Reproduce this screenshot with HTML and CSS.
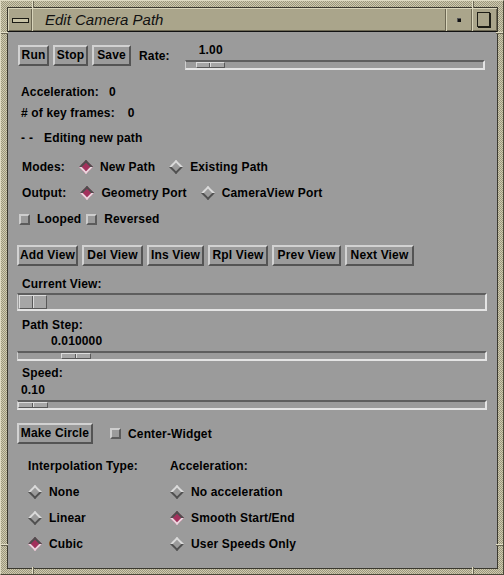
FILE: index.html
```html
<!DOCTYPE html>
<html>
<head>
<meta charset="utf-8">
<title>Edit Camera Path</title>
<link rel="stylesheet" href="styles.css">
</head>
<body>
<div class="window">
  <span class="notch nv nt" style="left:31px"></span>
  <span class="notch nv nt" style="left:471px"></span>
  <span class="notch nv nb" style="left:31px"></span>
  <span class="notch nv nb" style="left:471px"></span>
  <span class="notch nh nl" style="top:31px"></span>
  <span class="notch nh nr" style="top:31px"></span>
  <span class="notch nh nl" style="top:543px"></span>
  <span class="notch nh nr" style="top:543px"></span>
  <div class="inner">
    <div class="titlebar">
      <div class="seg seg-menu"><span class="menu-bar"></span></div>
      <div class="seg seg-title">Edit Camera Path</div>
      <div class="seg seg-min"><span class="min-dot"></span></div>
      <div class="seg seg-max"><span class="max-box"></span></div>
    </div>
    <div class="body">
      <div class="row1">
        <div class="grid3">
          <div class="btn">Run</div>
          <div class="btn">Stop</div>
          <div class="btn">Save</div>
        </div>
        <div class="rate-label">Rate:</div>
        <div class="scale">
          <div class="scale-val">1.00</div>
          <div class="trough thin"><span class="thumb" style="margin-left:10px;width:29px"></span></div>
        </div>
      </div>

      <div class="line l1">Acceleration:<span class="v">0</span></div>
      <div class="line l2"># of key frames:<span class="v">0</span></div>
      <div class="line l3"><span class="dash">--</span><span class="v">Editing new path</span></div>

      <div class="opts o1">
        <span class="opt-label">Modes:</span>
        <span class="radio first on"><i class="dia"></i>New Path</span>
        <span class="radio"><i class="dia"></i>Existing Path</span>
      </div>
      <div class="opts o2">
        <span class="opt-label">Output:</span>
        <span class="radio first on"><i class="dia"></i>Geometry Port</span>
        <span class="radio"><i class="dia"></i>CameraView Port</span>
      </div>
      <div class="opts o3">
        <span class="check"><i class="box"></i>Looped</span>
        <span class="check second"><i class="box"></i>Reversed</span>
      </div>

      <div class="grid6">
        <div class="btn">Add View</div>
        <div class="btn">Del View</div>
        <div class="btn">Ins View</div>
        <div class="btn">Rpl View</div>
        <div class="btn">Prev View</div>
        <div class="btn">Next View</div>
      </div>

      <div class="line s-label1">Current View:</div>
      <div class="trough wide tall"><span class="thumb" style="margin-left:1px;width:28px"></span></div>

      <div class="line s-label2">Path Step:</div>
      <div class="line s-val2">0.010000</div>
      <div class="trough wide thin t2"><span class="thumb" style="margin-left:43px;width:30px"></span></div>

      <div class="line s-label3">Speed:</div>
      <div class="line s-val3">0.10</div>
      <div class="trough wide thin t3"><span class="thumb" style="margin-left:0px;width:30px"></span></div>

      <div class="circle-row">
        <div class="btn btn-circle">Make Circle</div>
        <span class="check cw"><i class="box"></i>Center-Widget</span>
      </div>

      <div class="cols">
        <div class="col">
          <div class="col-head">Interpolation Type:</div>
          <span class="radio"><i class="dia"></i>None</span>
          <span class="radio"><i class="dia"></i>Linear</span>
          <span class="radio on"><i class="dia"></i>Cubic</span>
        </div>
        <div class="col">
          <div class="col-head">Acceleration:</div>
          <span class="radio"><i class="dia"></i>No acceleration</span>
          <span class="radio on"><i class="dia"></i>Smooth Start/End</span>
          <span class="radio"><i class="dia"></i>User Speeds Only</span>
        </div>
      </div>
    </div>
  </div>
</div>
</body>
</html>
```

FILE: styles.css
```css
html, body {
  margin: 0;
  padding: 0;
  background: #9b9b9b;
}

body {
  font-family: "Liberation Sans", Arial, sans-serif;
  font-size: 12px;
  font-weight: bold;
  letter-spacing: 0.15px;
  color: #000;
}

.window {
  position: relative;
  box-sizing: border-box;
  width: 504px;
  height: 575px;
  padding: 7px 6px 6px 7px;
  border: 1px solid;
  border-color: #dedac2 #4a4838 #4a4838 #dedac2;
  background: repeating-conic-gradient(#cfcbb0 0 25%, #9c977d 0 50%) 0 0 / 2px 2px;
}

.notch {
  position: absolute;
  background: #e2dec6;
}
.nv { width: 1px; height: 7px; box-shadow: 1px 0 0 #6a6654; }
.nh { height: 1px; width: 7px; box-shadow: 0 1px 0 #6a6654; }
.nt { top: 0; }
.nb { bottom: 0; }
.nl { left: 0; }
.nr { right: 0; }

.inner {
  height: 100%;
  display: flex;
  flex-direction: column;
  box-shadow: 0 0 0 1px #3a382e;
}

.titlebar {
  flex: none;
  height: 23px;
  display: flex;
  background: #aaa58b;
  border-bottom: 1px solid #111;
}

.seg {
  box-sizing: border-box;
  height: 23px;
  display: flex;
  align-items: center;
  justify-content: center;
  box-shadow: inset 1px 1px 0 #d9d5bb, inset -1px -1px 0 #6c6753;
}

.seg-menu { width: 24px; }
.seg-title {
  flex: 1;
  justify-content: flex-start;
  padding-left: 13px;
  font-style: italic;
  font-weight: normal;
  font-size: 15px;
  letter-spacing: 0;
  color: #111;
  line-height: 23px;
}
.seg-min { width: 26px; }
.seg-max { width: 25px; }

.menu-bar {
  box-sizing: border-box;
  width: 17px;
  height: 5px;
  margin-top: 1px;
  border: 1px solid #1a1a14;
  background: #c8c3a6;
}

.min-dot {
  width: 4px;
  height: 4px;
  background: #111;
  box-shadow: inset 1px 1px 0 #555;
}

.max-box {
  box-sizing: border-box;
  width: 13px;
  height: 15px;
  margin: 0 3px 0 0;
  border: 1px solid #1d1d16;
  box-shadow: 1px 1px 0 #1d1d16;
  background: #aaa58b;
}

.body {
  flex: 1;
  background: #9b9b9b;
  padding: 10px 0 0 10px;
}

/* buttons */
.btn {
  box-sizing: border-box;
  height: 21px;
  border: 2px solid;
  border-color: #d2d2d2 #545454 #545454 #d2d2d2;
  background: #9b9b9b;
  text-align: center;
  line-height: 17px;
  white-space: nowrap;
}

.row1 {
  display: flex;
  align-items: flex-start;
}

.grid3 {
  display: grid;
  grid-template-columns: 31px 35px 39px;
  column-gap: 4px;
  margin-top: 3px;
}

.rate-label {
  margin: 7px 0 0 8px;
  line-height: 14px;
}

.scale {
  width: 300px;
  margin: 1px 0 0 15px;
}

.scale-val {
  line-height: 14px;
  padding-left: 14px;
}

/* troughs */
.trough {
  box-sizing: border-box;
  display: flex;
  border-style: solid;
  border-width: 2px 2px 2px 1px;
  border-color: #5e5e5e #e4e4e4 #e4e4e4 #cfcfcf;
  background: #9b9b9b;
}
.scale .trough { margin-top: 3px; height: 11px; }
.trough.wide { width: 470px; margin-left: -1px; }
.trough.tall { height: 18px; margin-top: 2px; }
.trough.thin { height: 10px; }
.t2 { margin-top: 3px; }
.t3 { margin-top: 3px; }

.thumb {
  box-sizing: border-box;
  height: 100%;
  border: 1px solid;
  border-color: #dcdcdc #585858 #585858 #dcdcdc;
  background:
    linear-gradient(to right, transparent calc(50% - 1px), #585858 calc(50% - 1px) 50%, #dcdcdc 50% calc(50% + 1px), transparent calc(50% + 1px)),
    #a6a6a6;
}

/* text lines */
.line {
  height: 14px;
  line-height: 14px;
  margin-left: 3px;
  white-space: nowrap;
}
.line .v { margin-left: 10px; }
.l1 { margin-top: 15px; }
.l2 { margin-top: 7px; }
.l2 .v { margin-left: 13px; }
.l3 { margin-top: 11px; }
.dash { letter-spacing: 4px; }
.l3 .v { margin-left: 7px; }

/* option rows */
.opts {
  display: flex;
  align-items: center;
  height: 14px;
  margin-left: 4px;
  white-space: nowrap;
}
.o1 { margin-top: 15px; }
.o2 { margin-top: 12px; }
.o3 { margin-top: 12px; margin-left: 1px; }

.radio {
  display: inline-flex;
  align-items: center;
  height: 14px;
  line-height: 14px;
  margin-left: 14px;
  white-space: nowrap;
}
.radio .dia {
  position: relative;
  width: 14px;
  height: 14px;
  margin-right: 7px;
  flex: none;
}
.radio .dia::before {
  content: "";
  position: absolute;
  left: 2px;
  top: 2px;
  width: 10px;
  height: 10px;
  box-sizing: border-box;
  transform: rotate(45deg);
  border: 2px solid;
  border-color: #dadada #505050 #505050 #dadada;
  background: #9b9b9b;
}
.radio.on .dia::before {
  border-color: #4e4e4e #ead6de #ead6de #4e4e4e;
  background: #a3305c;
}

.check {
  display: inline-flex;
  align-items: center;
  height: 14px;
  line-height: 14px;
  white-space: nowrap;
}
.check .box {
  box-sizing: border-box;
  width: 11px;
  height: 11px;
  margin-right: 7px;
  border: 2px solid;
  border-color: #cdcdcd #5c5c5c #5c5c5c #cdcdcd;
  background: #9b9b9b;
}
.check.second { margin-left: 5px; }

.grid6 {
  display: grid;
  grid-template-columns: 61px 61px 57px 60px 69px 69px;
  column-gap: 4px;
  margin: 19px 0 0 -1px;
}

.s-label1 { margin-top: 11px; margin-left: 4px; }
.s-label2 { margin-top: 7px; margin-left: 4px; }
.s-val2 { margin-top: 2px; margin-left: 33px; }
.s-label3 { margin-top: 5px; margin-left: 4px; }
.s-val3 { margin-top: 3px; margin-left: 3px; }

.circle-row {
  display: flex;
  align-items: center;
  margin: 13px 0 0 -1px;
}
.btn-circle { width: 76px; }
.check.cw { margin-left: 17px; }

.cols {
  display: grid;
  grid-template-columns: 142px 1fr;
  margin: 15px 0 0 10px;
}
.col {
  display: flex;
  flex-direction: column;
  align-items: flex-start;
  row-gap: 12px;
}
.col-head {
  height: 14px;
  line-height: 14px;
}
.col .radio { margin-left: 0; }
```
